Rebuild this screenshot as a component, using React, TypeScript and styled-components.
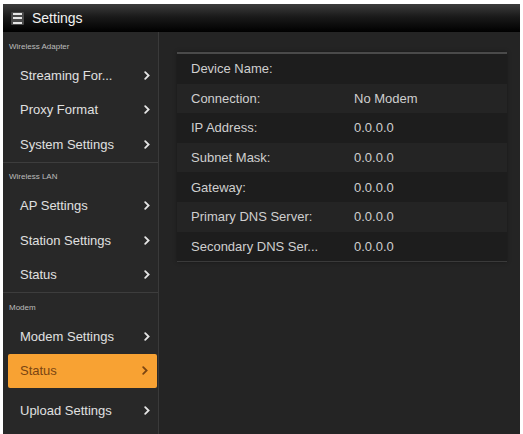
import React from 'react';
import styled, { createGlobalStyle } from 'styled-components';

const GlobalStyle = createGlobalStyle`
  html, body {
    margin: 0;
    padding: 0;
    background: #ffffff;
  }
  #root {
    padding: 4px 3px 0 3px;
  }
`;

const Screen = styled.div`
  width: 517px;
  height: 430px;
  display: flex;
  flex-direction: column;
  background: #242424;
  font-family: 'Liberation Sans', Arial, sans-serif;
  overflow: hidden;
`;

const TitleBar = styled.header`
  height: 28px;
  flex-shrink: 0;
  display: flex;
  align-items: center;
  gap: 8px;
  padding-left: 8px;
  background: linear-gradient(to bottom, #3c3c3c 0%, #1a1a1a 45%, #000000 100%);
  color: #f2f2f2;
  font-size: 14px;
  box-sizing: border-box;
`;

const MenuIcon = styled.span`
  width: 13px;
  height: 13px;
  display: flex;
  flex-direction: column;
  justify-content: space-between;
  padding: 1px 2px;
  box-sizing: border-box;
  background: #4a4a4a;
  border-radius: 1px;

  span {
    display: block;
    height: 2px;
    background: #e6e6e6;
  }
`;

const Body = styled.div`
  flex: 1;
  display: flex;
  min-height: 0;
`;

const Sidebar = styled.nav`
  width: 155px;
  flex-shrink: 0;
  background: #282828;
  border-right: 1px solid #3a3a3a;
  box-shadow: 2px 0 0 #1a1a1a, 3px 0 0 #2c2c2c;
  display: flex;
  flex-direction: column;
`;

const Section = styled.div<{ $divided?: boolean }>`
  border-top: ${p => (p.$divided ? '1px solid #3d3d3d' : 'none')};
`;

const SectionLabel = styled.div`
  height: 26px;
  display: flex;
  align-items: center;
  padding: 2px 0 0 6px;
  box-sizing: border-box;
  font-size: 8px;
  color: #bdbdbd;
`;

const NavItem = styled.div<{ $active?: boolean }>`
  height: 34.5px;
  display: flex;
  align-items: center;
  justify-content: space-between;
  box-sizing: border-box;
  margin: ${p => (p.$active ? '0 1px 5px 5px' : '0')};
  padding: ${p => (p.$active ? '0 9px 0 12px' : '0 8px 0 17px')};
  background: ${p => (p.$active ? '#f8a233' : 'transparent')};
  border-radius: ${p => (p.$active ? '2px' : '0')};
  color: ${p => (p.$active ? '#7a4512' : '#e0e0e0')};
  font-size: 13px;
`;

const Chevron = styled.svg<{ $active?: boolean }>`
  width: 6px;
  height: 9px;
  flex-shrink: 0;
  stroke: ${p => (p.$active ? '#7a4512' : '#e6e6e6')};
`;

const Content = styled.main`
  flex: 1;
  padding: 20px 13px 0 18px;
  background: #242424;
`;

const InfoTable = styled.div`
  border-top: 2px solid #4a4a4a;
  border-bottom: 1px solid #3a3a3a;
  box-shadow: 0 0 4px rgba(0, 0, 0, 0.35);
`;

const InfoRow = styled.div<{ $shade?: boolean }>`
  height: 29.6px;
  display: grid;
  grid-template-columns: 163px 1fr;
  align-items: center;
  padding-left: 14px;
  background: ${p => (p.$shade ? '#1d1d1d' : '#242424')};
  color: #cfcfcf;
  font-size: 13px;
`;

const Arrow: React.FC<{ active?: boolean }> = ({ active }) => (
  <Chevron $active={active} viewBox="0 0 6 9" fill="none" strokeWidth={1.8} strokeLinecap="round">
    <path d="M1.2 1.2 L4.6 4.5 L1.2 7.8" />
  </Chevron>
);

const menu = [
  { title: 'Wireless Adapter', items: ['Streaming For...', 'Proxy Format', 'System Settings'] },
  { title: 'Wireless LAN', items: ['AP Settings', 'Station Settings', 'Status'] },
  { title: 'Modem', items: ['Modem Settings', 'Status', 'Upload Settings'] },
];

const info: [string, string][] = [
  ['Device Name:', ''],
  ['Connection:', 'No Modem'],
  ['IP Address:', '0.0.0.0'],
  ['Subnet Mask:', '0.0.0.0'],
  ['Gateway:', '0.0.0.0'],
  ['Primary DNS Server:', '0.0.0.0'],
  ['Secondary DNS Ser...', '0.0.0.0'],
];

export default function App() {
  return (
    <>
      <GlobalStyle />
      <Screen>
        <TitleBar>
          <MenuIcon>
            <span />
            <span />
            <span />
          </MenuIcon>
          Settings
        </TitleBar>
        <Body>
          <Sidebar>
            {menu.map((section, si) => (
              <Section key={section.title} $divided={si > 0}>
                <SectionLabel>{section.title}</SectionLabel>
                {section.items.map(item => {
                  const active = si === 2 && item === 'Status';
                  return (
                    <NavItem key={item} $active={active}>
                      {item}
                      <Arrow active={active} />
                    </NavItem>
                  );
                })}
              </Section>
            ))}
          </Sidebar>
          <Content>
            <InfoTable>
              {info.map(([label, value], i) => (
                <InfoRow key={label} $shade={i % 2 === 0}>
                  <span>{label}</span>
                  <span>{value}</span>
                </InfoRow>
              ))}
            </InfoTable>
          </Content>
        </Body>
      </Screen>
    </>
  );
}
